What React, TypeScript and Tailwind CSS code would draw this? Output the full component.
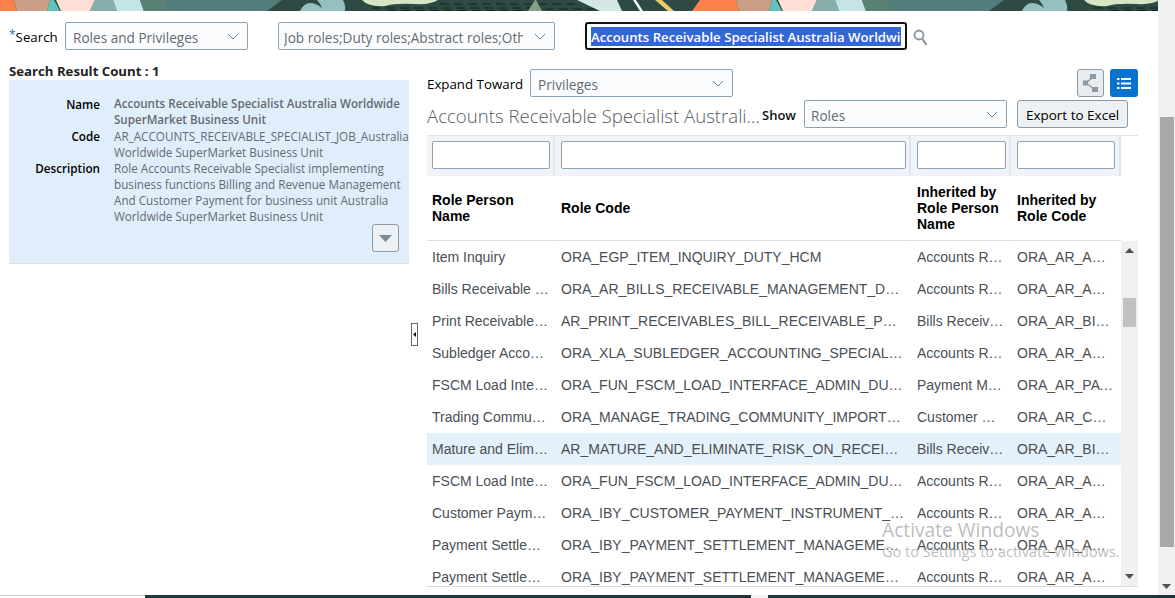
import React from "react";

function BannerTile({ x }: { x: number }) {
  return (
    <g transform={`translate(${x} 0)`}>
      <rect x="-30" y="0" width="722" height="11" fill="#2f4a45" />
      <polygon points="-22,0 14,0 17,11 -30,11" fill="#fb804a" />
      <polygon points="14,0 50,0 47,11 17,11" fill="#cb9f86" />
      <polygon points="50,0 54,0 60,11 47,11" fill="#62c3bb" />
      <polygon points="56,0 95,0 90,11 61,11" fill="#fddfd5" />
      <polygon points="95,0 113,0 117,11 90,11" fill="#86aeaa" />
      <polygon points="113,0 140,0 144,11 117,11" fill="#c7e4e4" />
      <polygon points="140,0 165,0 170,11 144,11" fill="#5a7f74" />
      <polygon points="165,0 282,0 267,11 170,11" fill="#527d7a" />
      <path d="M300 11 Q304 3 310 3 Q316 3 322 8 Q320 3 317 0 L343 0 Q346 6 345 11 Z" fill="#96bfbf" />
      <path d="M362 0 L438 0 Q430 5 415 4 Q395 3 385 6 Q368 7 362 0 Z" fill="#d6e5c4" />
      <g stroke="#13231f" strokeWidth="1" strokeDasharray="9 5">
        <line x1="372" y1="8" x2="530" y2="8" />
        <line x1="440" y1="4" x2="578" y2="4" />
        <line x1="388" y1="10.5" x2="528" y2="10.5" />
        <line x1="545" y1="9" x2="598" y2="9" />
      </g>
      <polygon points="535,0 536,0 542,11 528,11" fill="#8a9e86" />
      <polygon points="577,0 617,0 622,11 600,11" fill="#d5e6e6" />
      <polygon points="633,0 636,0 643,11 640,11" fill="#f4f7f5" />
      <polygon points="655,0 662,0 674,11 668,11" fill="#f0c96a" />
    </g>
  );
}

function Banner() {
  return (
    <svg className="block h-[11px] w-[1158px] shrink-0" viewBox="0 0 1158 11" preserveAspectRatio="none">
      <BannerTile x={0} />
      <BannerTile x={722} />
    </svg>
  );
}

function Chevron() {
  return (
    <svg width="12" height="7" viewBox="0 0 12 7" className="shrink-0">
      <polyline points="1,1 6,6 11,1" fill="none" stroke="#75828c" strokeWidth="1" />
    </svg>
  );
}

function Select({ text, className, gap = "mr-[8px]" }: { text: string; className: string; gap?: string }) {
  return (
    <div
      className={`flex h-[28px] items-center rounded-[2px] border border-[#8ea3b2] bg-[#fbfcfe] pr-[8px] text-[13.6px] text-[#666b70] ${className}`}
    >
      <span className={`${gap} min-w-0 flex-1 overflow-hidden whitespace-nowrap pt-[4px]`}>{text}</span>
      <Chevron />
    </div>
  );
}

const rows: [string, string, string, string][] = [
  ["Item Inquiry", "ORA_EGP_ITEM_INQUIRY_DUTY_HCM", "Accounts Receivable Specialist", "ORA_AR_ACCOUNTS_RECEIVABLE"],
  ["Bills Receivable Management Duty", "ORA_AR_BILLS_RECEIVABLE_MANAGEMENT_DUTY_HCM", "Accounts Receivable Specialist", "ORA_AR_ACCOUNTS_RECEIVABLE"],
  ["Print Receivables Bill", "AR_PRINT_RECEIVABLES_BILL_RECEIVABLE_PRIV_OBS", "Bills Receivable Management", "ORA_AR_BILLS_RECEIVABLE"],
  ["Subledger Accounting Specialist", "ORA_XLA_SUBLEDGER_ACCOUNTING_SPECIALIST_DUTY", "Accounts Receivable Specialist", "ORA_AR_ACCOUNTS_RECEIVABLE"],
  ["FSCM Load Interface", "ORA_FUN_FSCM_LOAD_INTERFACE_ADMIN_DUTY_HCM", "Payment Manager", "ORA_AR_PAYMENT_MANAGER"],
  ["Trading Community Import", "ORA_MANAGE_TRADING_COMMUNITY_IMPORT_BATCH", "Customer Workbench", "ORA_AR_CUSTOMER_PAYMENTS"],
  ["Mature and Eliminate Risk", "AR_MATURE_AND_ELIMINATE_RISK_ON_RECEIVABLES_BILL", "Bills Receivable Management", "ORA_AR_BILLS_RECEIVABLE"],
  ["FSCM Load Interface", "ORA_FUN_FSCM_LOAD_INTERFACE_ADMIN_DUTY_HCM", "Accounts Receivable Specialist", "ORA_AR_ACCOUNTS_RECEIVABLE"],
  ["Customer Payment Instrument", "ORA_IBY_CUSTOMER_PAYMENT_INSTRUMENT_MANAGEMENT", "Accounts Receivable Specialist", "ORA_AR_ACCOUNTS_RECEIVABLE"],
  ["Payment Settlement", "ORA_IBY_PAYMENT_SETTLEMENT_MANAGEMENT_DUTY_HCM", "Accounts Receivable Specialist", "ORA_AR_ACCOUNTS_RECEIVABLE"],
  ["Payment Settlement", "ORA_IBY_PAYMENT_SETTLEMENT_MANAGEMENT_DUTY_HCM", "Accounts Receivable Specialist", "ORA_AR_ACCOUNTS_RECEIVABLE"],
];

const colW = ["w-[128px]", "w-[356px]", "w-[100px]", "w-[110px]"];

function FilterCell({ w, first, last }: { w: string; first?: boolean; last?: boolean }) {
  return (
    <div
      className={`${w} h-[40px] border-r-2 border-[#dfe5ea] bg-[#f0f3f7] pt-[5px] ${first ? "pl-[5px]" : "pl-[6px]"} ${last ? "pr-[4px]" : "pr-[3px]"}`}
    >
      <div className="h-[28px] rounded-[2px] border border-[#8ea3b2] bg-white" />
    </div>
  );
}

function Head({ w, first, children }: { w: string; first?: boolean; children: React.ReactNode }) {
  return (
    <div
      className={`${w} flex h-[65px] items-center border-b border-l border-b-[#d6dfe6] border-l-white pr-[4px] text-[14px] font-bold leading-[16px] text-black ${first ? "pl-[4px]" : "pl-[5px]"}`}
    >
      <div>{children}</div>
    </div>
  );
}

function Row({ cells, active }: { cells: [string, string, string, string]; active: boolean }) {
  return (
    <div className={`flex h-[32px] shrink-0 items-center text-[14px] text-[#4a4f55] ${active ? "bg-[#e4f0fa]" : ""}`}>
      <div className={`${colW[0]} truncate pl-[5px] pr-[6px]`}>{cells[0]}</div>
      <div className={`${colW[1]} truncate pl-[6px] pr-[5px]`}>{cells[1]}</div>
      <div className={`${colW[2]} truncate pl-[6px] pr-[6px]`}>{cells[2]}</div>
      <div className={`${colW[3]} truncate pl-[6px] pr-[8px]`}>{cells[3]}</div>
    </div>
  );
}

function Arrow({ up, cls }: { up: boolean; cls?: string }) {
  return (
    <svg width="9" height="5" viewBox="0 0 9 5" className={cls}>
      <polygon points={up ? "4.5,0 9,5 0,5" : "0,0 9,0 4.5,5"} fill="#505050" />
    </svg>
  );
}

export default function App() {
  return (
    <div className="relative flex h-[598px] w-[1175px] flex-col overflow-hidden bg-white font-['Open_Sans',sans-serif]">
      <div className="flex min-h-0 flex-1">
        <div className="flex w-[1158px] flex-col">
          <Banner />
          <div className="mt-[11px] flex h-[28px] items-center pl-[9px]">
            <span className="w-[56px] whitespace-nowrap pt-[4px] text-[13.3px] text-black">
              <span className="relative top-[-3px] text-[12px] leading-none text-[#2a6fb5]">*</span>Search
            </span>
            <Select text="Roles and Privileges" className="w-[183px] pl-[7px]" />
            <Select text="Job roles;Duty roles;Abstract roles;Other" className="ml-[30px] w-[277px] pl-[5px]" gap="mr-[11px]" />
            <div className="ml-[30px] flex h-[28px] w-[322px] items-center rounded-[3px] border-2 border-[#111] pl-[4px]">
              <span className="h-[19px] w-[310px] overflow-hidden whitespace-nowrap bg-[#3367d6] text-[13.2px] font-semibold leading-[20px] text-white">
                Accounts Receivable Specialist Australia Worldwide
              </span>
            </div>
            <svg width="16" height="18" viewBox="0 0 16 18" className="ml-[6px] mt-[4px]">
              <circle cx="6" cy="6" r="4.5" fill="none" stroke="#8b959c" strokeWidth="1.8" />
              <line x1="9.5" y1="10" x2="13.5" y2="16" stroke="#8b959c" strokeWidth="2.2" />
            </svg>
          </div>

          <div className="flex min-h-0 flex-1">
            <div className="ml-[9px] w-[400px] pt-[13px]">
              <div className="h-[17px] whitespace-nowrap text-[13.2px] font-bold leading-[17px] text-[#222]">
                Search Result Count : 1
              </div>
              <div className="flex h-[184px] flex-col overflow-hidden border-b border-[#d8dde0] bg-[#e0eefc] pt-[16px] text-[11.7px] leading-[16px]">
                <div className="grid grid-cols-[91px_1fr] gap-x-[14px] text-[#666a70]">
                  <div className="text-right font-semibold text-black">Name</div>
                  <div className="whitespace-nowrap text-[11.6px] font-semibold">
                    Accounts Receivable Specialist Australia Worldwide
                    <br />
                    SuperMarket Business Unit
                  </div>
                  <div className="text-right font-semibold text-black">Code</div>
                  <div className="whitespace-nowrap">
                    AR_ACCOUNTS_RECEIVABLE_SPECIALIST_JOB_Australia
                    <br />
                    Worldwide SuperMarket Business Unit
                  </div>
                  <div className="text-right font-semibold text-black">Description</div>
                  <div className="whitespace-nowrap">
                    Role Accounts Receivable Specialist implementing
                    <br />
                    business functions Billing and Revenue Management
                    <br />
                    And Customer Payment for business unit Australia
                    <br />
                    Worldwide SuperMarket Business Unit
                  </div>
                </div>
                <div className="mr-[10px] flex justify-end">
                  <div className="flex h-[28px] w-[27px] items-center justify-center rounded-[3px] border border-[#8b9aa6] bg-[#eef1f3]">
                    <svg width="13" height="7" viewBox="0 0 13 7">
                      <polygon points="0,0 13,0 6.5,7" fill="#7d8a94" />
                    </svg>
                  </div>
                </div>
              </div>
            </div>

            <div className="w-[18px] pl-[2px] pt-[273px]">
              <div className="flex h-[23px] w-[7px] items-center justify-center border border-[#56707f] bg-white">
                <svg width="3" height="5" viewBox="0 0 3 5">
                  <polygon points="3,0 3,5 0,2.5" fill="#111" />
                </svg>
              </div>
            </div>

            <div className="flex w-[711px] flex-col pt-[19px]">
              <div className="flex h-[28px] items-center">
                <span className="w-[103px] whitespace-nowrap pt-[4px] text-[13.3px] text-black">Expand Toward</span>
                <Select text="Privileges" className="w-[203px] pl-[7px]" />
                <div className="ml-auto flex h-[28px] w-[27px] items-center justify-center rounded-[3px] border border-[#8b9aa6] bg-[#e8ecef]">
                  <svg width="16" height="18" viewBox="0 0 16 18">
                    <line x1="3" y1="9" x2="10" y2="3" stroke="#8c9aa5" strokeWidth="1.5" />
                    <line x1="3" y1="9" x2="11" y2="15" stroke="#8c9aa5" strokeWidth="1.5" />
                    <rect x="0" y="6.5" width="5" height="5" fill="#8c9aa5" />
                    <rect x="7" y="0" width="6" height="5" fill="#8c9aa5" />
                    <rect x="9" y="13" width="6" height="5" fill="#8c9aa5" />
                  </svg>
                </div>
                <div className="ml-[6px] flex h-[28px] w-[28px] items-center justify-center rounded-[3px] bg-[#0572ce]">
                  <svg width="14" height="11" viewBox="0 0 14 11" fill="#fff">
                    <rect x="0" y="0" width="2.5" height="2" />
                    <rect x="4" y="0" width="10" height="2" />
                    <rect x="0" y="4.5" width="2.5" height="2" />
                    <rect x="4" y="4.5" width="10" height="2" />
                    <rect x="0" y="9" width="2.5" height="2" />
                    <rect x="4" y="9" width="10" height="2" />
                  </svg>
                </div>
              </div>

              <div className="mt-[3px] flex h-[28px] items-center">
                <div className="w-[335px] truncate pt-[4px] text-[18.6px] font-light text-[#555a60]">
                  Accounts Receivable Specialist Australia Worldwide SuperMarket Business Unit
                </div>
                <span className="w-[42px] pt-[4px] text-[13px] font-semibold text-[#111]">Show</span>
                <Select text="Roles" className="w-[203px] pl-[6px]" />
                <div className="ml-[10px] flex h-[28px] w-[111px] items-center justify-center rounded-[3px] border border-[#8b9aa6] bg-[#eef1f3] pt-[2px] text-[13.5px] text-black">
                  Export to Excel
                </div>
              </div>

              <div className="mt-[7px] flex flex-col border-t border-[#dde4ea] font-['Liberation_Sans',Arial,sans-serif]">
                <div className="flex w-[694px]">
                  {colW.map((w, i) => (
                    <FilterCell key={i} w={w} first={i === 0} last={i === 3} />
                  ))}
                </div>
                <div className="flex w-[694px]">
                  <Head w={colW[0]} first>
                    Role Person
                    <br />
                    Name
                  </Head>
                  <Head w={colW[1]}>Role Code</Head>
                  <Head w={colW[2]}>
                    Inherited by
                    <br />
                    Role Person
                    <br />
                    Name
                  </Head>
                  <Head w={colW[3]}>
                    Inherited by
                    <br />
                    Role Code
                  </Head>
                </div>
                <div className="flex h-[346px] border-b border-[#d6dfe6]">
                  <div className="flex w-[694px] flex-col overflow-hidden">
                    {rows.map((r, i) => (
                      <Row key={i} cells={r} active={i === 6} />
                    ))}
                  </div>
                  <div className="flex w-[17px] flex-col items-center bg-[#f0f0f0]">
                    <Arrow up cls="mt-[7px]" />
                    <div className="mt-[45px] h-[29px] w-[13px] bg-[#c1c1c1]" />
                    <Arrow up={false} cls="mt-[247px]" />
                  </div>
                </div>
              </div>
            </div>
          </div>
        </div>

        <div className="flex w-[17px] flex-col items-center bg-[#f1f1f1]">
          <div className="mt-[117px] h-[430px] w-[14px] bg-[#a8a8a8]" />
          <Arrow up={false} cls="mt-[37px]" />
        </div>
      </div>

      <div className="flex h-[3px] shrink-0">
        <div className="w-[145px] border-t border-[#cccccc] bg-white" />
        <div className="w-[606px] bg-[#1f3340]" />
        <div className="w-[17px] bg-[#f1f1f1]" />
        <div className="flex-1 bg-[#1f3340]" />
      </div>

      <div className="pointer-events-none absolute left-[882px] top-[517px] whitespace-nowrap text-[#a6a6a6]/75">
        <div className="text-[19.2px] leading-[25px]">Activate Windows</div>
        <div className="text-[14.5px] leading-[20px]">Go to Settings to activate Windows.</div>
      </div>
    </div>
  );
}
